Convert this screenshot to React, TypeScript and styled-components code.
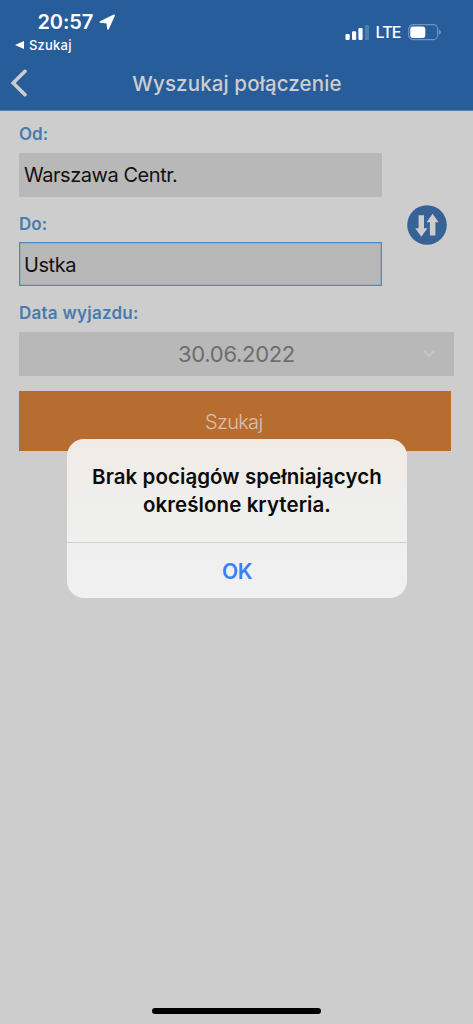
import React from "react";
import styled, { createGlobalStyle } from "styled-components";

const GlobalStyle = createGlobalStyle`
  * { box-sizing: border-box; }
  html, body { margin: 0; padding: 0; }
  body {
    background: #cdcdcd;
    font-family: Inter, "Liberation Sans", sans-serif;
    -webkit-font-smoothing: antialiased;
  }
  button { font-family: inherit; border: 0; padding: 0; background: none; }
`;

const Screen = styled.div`
  position: relative;
  width: 473px;
  height: 1024px;
  overflow: hidden;
  display: flex;
  flex-direction: column;
  background: #cdcdcd;
`;

const Header = styled.header`
  height: 111px;
  flex: none;
  display: flex;
  flex-direction: column;
  background: #285d9b;
  border-bottom: 1px solid #5d80ab;
`;

const StatusBar = styled.div`
  height: 56px;
  display: flex;
  justify-content: space-between;
  color: #fff;
`;

const StatusLeft = styled.div`
  padding: 10px 0 0 15px;
`;

const Clock = styled.div`
  display: flex;
  align-items: center;
  gap: 6px;
  padding-left: 22.5px;
  height: 24px;
  font-size: 20px;
  font-weight: 600;
  letter-spacing: -0.1px;
`;

const BackToApp = styled.div`
  display: flex;
  align-items: center;
  gap: 5px;
  height: 16px;
  margin-top: 3px;
  font-size: 13px;
  font-weight: 500;
  letter-spacing: 0.2px;
`;

const StatusRight = styled.div`
  display: flex;
  align-items: center;
  height: 20px;
  margin: 22px 32px 0 0;
`;

const Network = styled.span`
  margin: 0 7.5px 0 7px;
  font-size: 16px;
  line-height: 20px;
  font-weight: 500;
  letter-spacing: -0.9px;
`;

const NavBar = styled.div`
  height: 54px;
  display: grid;
  grid-template-columns: 40px 1fr 40px;
  align-items: center;
  color: #cdcdcd;
`;

const BackButton = styled.button`
  display: flex;
  padding: 0 0 0 10px;
  color: inherit;
`;

const Title = styled.h1`
  margin: 0;
  padding: 1px 0 0 1px;
  text-align: center;
  font-size: 20.5px;
  line-height: 28px;
  font-weight: 500;
  letter-spacing: 0.12px;
`;

const Form = styled.main`
  padding: 13px 19px 0;
`;

const Route = styled.div`
  display: flex;
  align-items: center;
  justify-content: space-between;
`;

const RouteFields = styled.div`
  width: 363px;
`;

const Field = styled.div`
  height: 89.5px;
`;

const Label = styled.label<{ $spacing?: number }>`
  display: block;
  height: 28.5px;
  line-height: 20px;
  color: #477bb0;
  font-size: 17px;
  font-weight: 600;
  letter-spacing: ${(p) => p.$spacing ?? 0}px;
`;

const TextBox = styled.div<{ $focused?: boolean }>`
  height: 44px;
  display: flex;
  align-items: center;
  padding: 1px 0 0 5px;
  background: #b8b8b8;
  box-shadow: ${(p) => (p.$focused ? "inset 0 0 0 1.3px #5089bb" : "none")};
  color: #111;
  font-size: 20px;
  letter-spacing: -0.45px;
`;

const SwapButton = styled.button`
  display: flex;
  margin: 22px 7px 0 0;
`;

const DateBox = styled.div`
  height: 44px;
  display: grid;
  grid-template-columns: 31px 1fr 31px;
  align-items: center;
  background: #b8b8b8;
  color: #6d6d6d;
  font-size: 22px;
  letter-spacing: -0.3px;
  text-align: center;
`;

const SearchButton = styled.button`
  display: block;
  width: 431.5px;
  height: 60px;
  margin-top: 15px;
  padding: 2px 2px 0 0;
  background: #b86d30;
  color: #d7c2b2;
  font-size: 20px;
  font-weight: 300;
  letter-spacing: -0.7px;
`;

const Dialog = styled.div`
  position: absolute;
  left: 67px;
  top: 439px;
  width: 340px;
  height: 159px;
  border-radius: 17px;
  overflow: hidden;
  display: flex;
  flex-direction: column;
  background: linear-gradient(#f1eae4 0, #f0ede9 35px, #efefee 70px, #f0f0f0 100%);
`;

const Message = styled.p`
  height: 104px;
  margin: 0;
  padding-top: 24px;
  border-bottom: 1px solid #cfcfce;
  color: #0b0b0b;
  text-align: center;
  font-size: 20.5px;
  line-height: 27.5px;
  font-weight: 600;
  letter-spacing: 0.07px;
`;

const Confirm = styled.button`
  flex: 1;
  padding-top: 2px;
  color: #3a7ff7;
  font-size: 21px;
  font-weight: 600;
  letter-spacing: -0.4px;
`;

const HomeIndicator = styled.div`
  position: absolute;
  left: 152px;
  bottom: 10px;
  width: 169px;
  height: 6px;
  border-radius: 3px;
  background: #000;
`;

const LocationArrow = () => (
  <svg width="17" height="17" viewBox="0 0 17 17">
    <path
      d="M15.1 1.3 9 14.9 8.2 8.7 1.4 8Z"
      fill="#fff"
      stroke="#fff"
      strokeWidth="1.7"
      strokeLinejoin="round"
    />
  </svg>
);

const Signal = () => (
  <svg width="24" height="16" viewBox="0 0 24 16" fill="#fff">
    <rect x="0.5" y="10" width="4.2" height="6" rx="1.2" />
    <rect x="7" y="7.2" width="4.2" height="8.8" rx="1.2" />
    <rect x="13.4" y="4" width="4.2" height="12" rx="1.2" />
    <rect x="19.8" y="1" width="4.2" height="15" rx="1.2" fill="#4e7fac" />
  </svg>
);

const Battery = () => (
  <svg width="33" height="17" viewBox="0 0 33 17">
    <rect x=".7" y=".7" width="29" height="15" rx="4.5" fill="none" stroke="#6e96bb" strokeWidth="1.2" />
    <rect x="2.3" y="2.5" width="15" height="11.4" rx="2.6" fill="#fff" />
    <path d="M31 5.8Q33 6.5 33 8.2T31 10.6Z" fill="#6e96bb" />
  </svg>
);

const SwapIcon = () => (
  <svg width="40" height="40" viewBox="0 0 40 40">
    <circle cx="20" cy="20" r="19.8" fill="#376295" />
    <path
      fill="#cdcdcd"
      d="M11.6 10.2H17V23.2H20.4L14.3 31.8 8.2 23.2H11.6ZM25.6 8.7 31.6 17.2H28.4V30.4H22.9V17.2H19.6Z"
    />
  </svg>
);

export default function App() {
  return (
    <>
      <GlobalStyle />
      <Screen>
        <Header>
          <StatusBar>
            <StatusLeft>
              <Clock>
                20:57
                <LocationArrow />
              </Clock>
              <BackToApp>
                <svg width="9" height="8" viewBox="0 0 9 8">
                  <path d="M0 4 9 0V8Z" fill="#fff" />
                </svg>
                Szukaj
              </BackToApp>
            </StatusLeft>
            <StatusRight>
              <Signal />
              <Network>LTE</Network>
              <Battery />
            </StatusRight>
          </StatusBar>
          <NavBar>
            <BackButton aria-label="Wstecz">
              <svg width="18" height="28" viewBox="0 0 18 28">
                <path
                  d="M15 2.3 3.2 14 15 25.7"
                  fill="none"
                  stroke="currentColor"
                  strokeWidth="3.6"
                  strokeLinecap="round"
                  strokeLinejoin="miter"
                />
              </svg>
            </BackButton>
            <Title>Wyszukaj połączenie</Title>
          </NavBar>
        </Header>
        <Form>
          <Route>
            <RouteFields>
              <Field>
                <Label>Od:</Label>
                <TextBox>Warszawa Centr.</TextBox>
              </Field>
              <Field>
                <Label>Do:</Label>
                <TextBox $focused>Ustka</TextBox>
              </Field>
            </RouteFields>
            <SwapButton aria-label="Zamień stacje">
              <SwapIcon />
            </SwapButton>
          </Route>
          <Label $spacing={0.25}>Data wyjazdu:</Label>
          <DateBox>
            <span />
            <span>30.06.2022</span>
            <svg width="12" height="8" viewBox="0 0 12 8">
              <path d="M1.2 1.2 6 6 10.8 1.2" fill="none" stroke="#c6c6c6" strokeWidth="2" />
            </svg>
          </DateBox>
          <SearchButton>Szukaj</SearchButton>
        </Form>
        <Dialog role="alertdialog">
          <Message>
            Brak pociągów spełniających
            <br />
            określone kryteria.
          </Message>
          <Confirm>OK</Confirm>
        </Dialog>
        <HomeIndicator />
      </Screen>
    </>
  );
}
